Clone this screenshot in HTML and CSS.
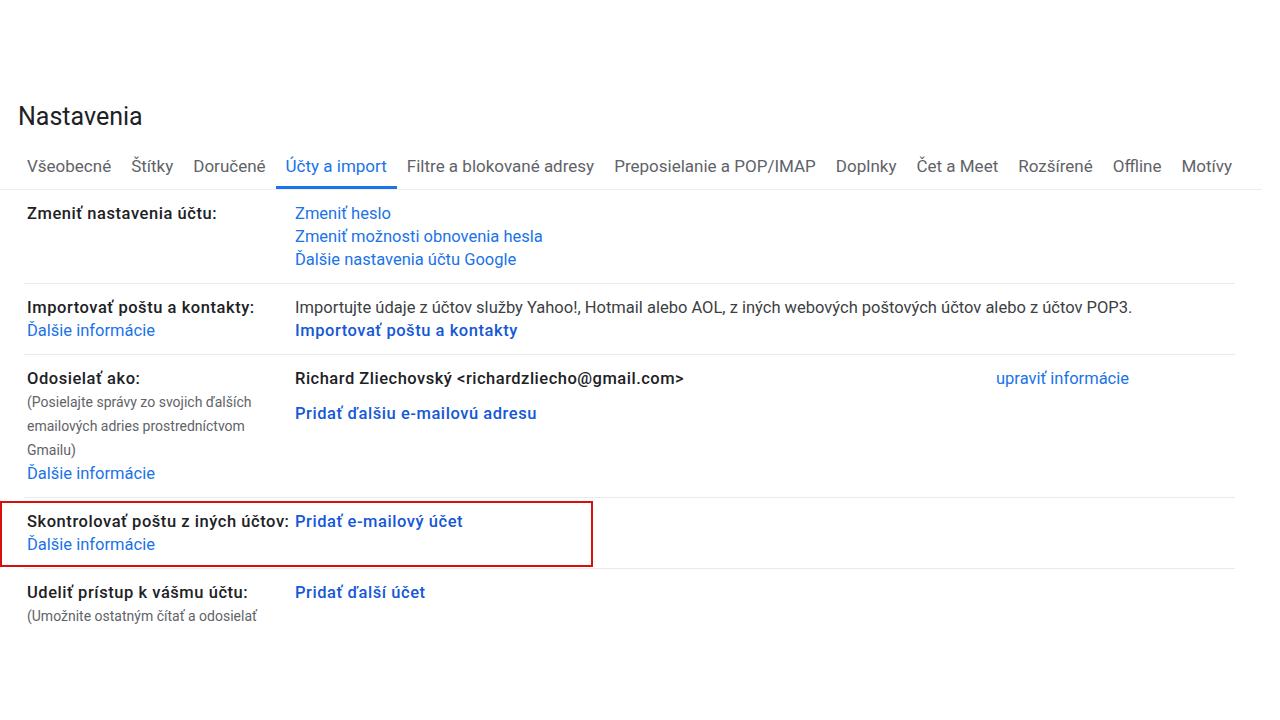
FILE: index.html
```html
<!DOCTYPE html>
<html lang="sk">
<head>
  <meta charset="UTF-8">
  <meta name="viewport" content="width=device-width, initial-scale=1.0">
  <title>Nastavenia</title>
  <link rel="stylesheet" href="styles.css">
</head>
<body>
  <div class="page">
    <h1 class="title">Nastavenia</h1>

    <!-- Settings tabs -->
    <div class="tabs">
      <a class="tab">Všeobecné</a>
      <a class="tab">Štítky</a>
      <a class="tab">Doručené</a>
      <a class="tab active">Účty a import</a>
      <a class="tab">Filtre a blokované adresy</a>
      <a class="tab">Preposielanie a POP/IMAP</a>
      <a class="tab">Doplnky</a>
      <a class="tab">Čet a Meet</a>
      <a class="tab">Rozšírené</a>
      <a class="tab">Offline</a>
      <a class="tab">Motívy</a>
    </div>

    <div class="settings">
      <div class="row">
        <div class="label">
          <span class="name">Zmeniť nastavenia účtu:</span>
        </div>
        <div class="value">
          <a class="link">Zmeniť heslo</a>
          <a class="link">Zmeniť možnosti obnovenia hesla</a>
          <a class="link">Ďalšie nastavenia účtu Google</a>
        </div>
      </div>

      <div class="row">
        <div class="label">
          <span class="name">Importovať poštu a kontakty:</span>
          <a class="link">Ďalšie informácie</a>
        </div>
        <div class="value">
          <span class="text">Importujte údaje z účtov služby Yahoo!, Hotmail alebo AOL, z iných webových poštových účtov alebo z účtov POP3.</span>
          <a class="link strong">Importovať poštu a kontakty</a>
        </div>
      </div>

      <div class="row">
        <div class="label">
          <span class="name">Odosielať ako:</span>
          <span class="hint">(Posielajte správy zo svojich ďalších emailových adries prostredníctvom Gmailu)</span>
          <a class="link">Ďalšie informácie</a>
        </div>
        <div class="value">
          <div class="sender">
            <span class="address">Richard Zliechovský &lt;richardzliecho@gmail.com&gt;</span>
            <a class="link">upraviť informácie</a>
          </div>
          <a class="link strong spaced">Pridať ďalšiu e-mailovú adresu</a>
        </div>
      </div>

      <div class="row">
        <div class="label">
          <span class="name nowrap">Skontrolovať poštu z iných účtov:</span>
          <a class="link">Ďalšie informácie</a>
        </div>
        <div class="value">
          <a class="link strong">Pridať e-mailový účet</a>
        </div>
        <div class="highlight"></div>
      </div>

      <div class="row">
        <div class="label">
          <span class="name">Udeliť prístup k vášmu účtu:</span>
          <span class="hint">(Umožnite ostatným čítať a odosielať</span>
        </div>
        <div class="value">
          <a class="link strong">Pridať ďalší účet</a>
        </div>
      </div>
    </div>
  </div>
</body>
</html>
```

FILE: styles.css
```css
body {
  margin: 0;
  background-color: #ffffff;
  color: #202124;
  font-family: Roboto, "Noto Sans", Arial, sans-serif;
}

.page {
  padding-top: 101px;
}

.title {
  margin: 0 0 17px 18px;
  font-size: 25px;
  font-weight: 400;
  line-height: 32px;
  color: #202124;
}

.tabs {
  display: flex;
  width: 1245px;
  padding-left: 17px;
  border-bottom: 1px solid #eceff1;
}

.tab {
  padding: 0 10px;
  height: 39px;
  line-height: 32px;
  font-size: 17px;
  color: #5f6368;
  white-space: nowrap;
  box-sizing: border-box;
  border-bottom: 3px solid transparent;
  cursor: pointer;
}

.tab.active {
  color: #1a73e8;
  border-bottom-color: #1a73e8;
  border-radius: 2px 2px 0 0;
}

.settings {
  width: 1211px;
  margin-left: 24px;
}

.row {
  position: relative;
  display: grid;
  grid-template-columns: 268px 1fr;
  padding: 12px 0 12px 3px;
  border-bottom: 1px solid #e8eaed;
  font-size: 16.5px;
  line-height: 23px;
}

.row:last-child {
  border-bottom: none;
}

.label,
.value {
  display: flex;
  flex-direction: column;
  align-items: flex-start;
}

.name {
  font-weight: 500;
  letter-spacing: 0.55px;
  color: #202124;
}

.nowrap {
  white-space: nowrap;
}

.hint {
  font-size: 14px;
  line-height: 24px;
  color: #5f6368;
  max-width: 234px;
}

.text {
  color: #3c4043;
}

.link {
  color: #1a73e8;
  cursor: pointer;
}

.link.strong {
  color: #1558d6;
  font-weight: 500;
  letter-spacing: 0.55px;
}

.link.spaced {
  margin-top: 12px;
}

.sender {
  display: grid;
  grid-template-columns: 701px auto;
}

.address {
  font-weight: 500;
  letter-spacing: 0.5px;
  color: #202124;
}

/* red frame around the "check mail" row */
.highlight {
  position: absolute;
  left: -24px;
  top: 3px;
  width: 593px;
  height: 66px;
  box-sizing: border-box;
  border: 2px solid #d80f0f;
  pointer-events: none;
}
```
